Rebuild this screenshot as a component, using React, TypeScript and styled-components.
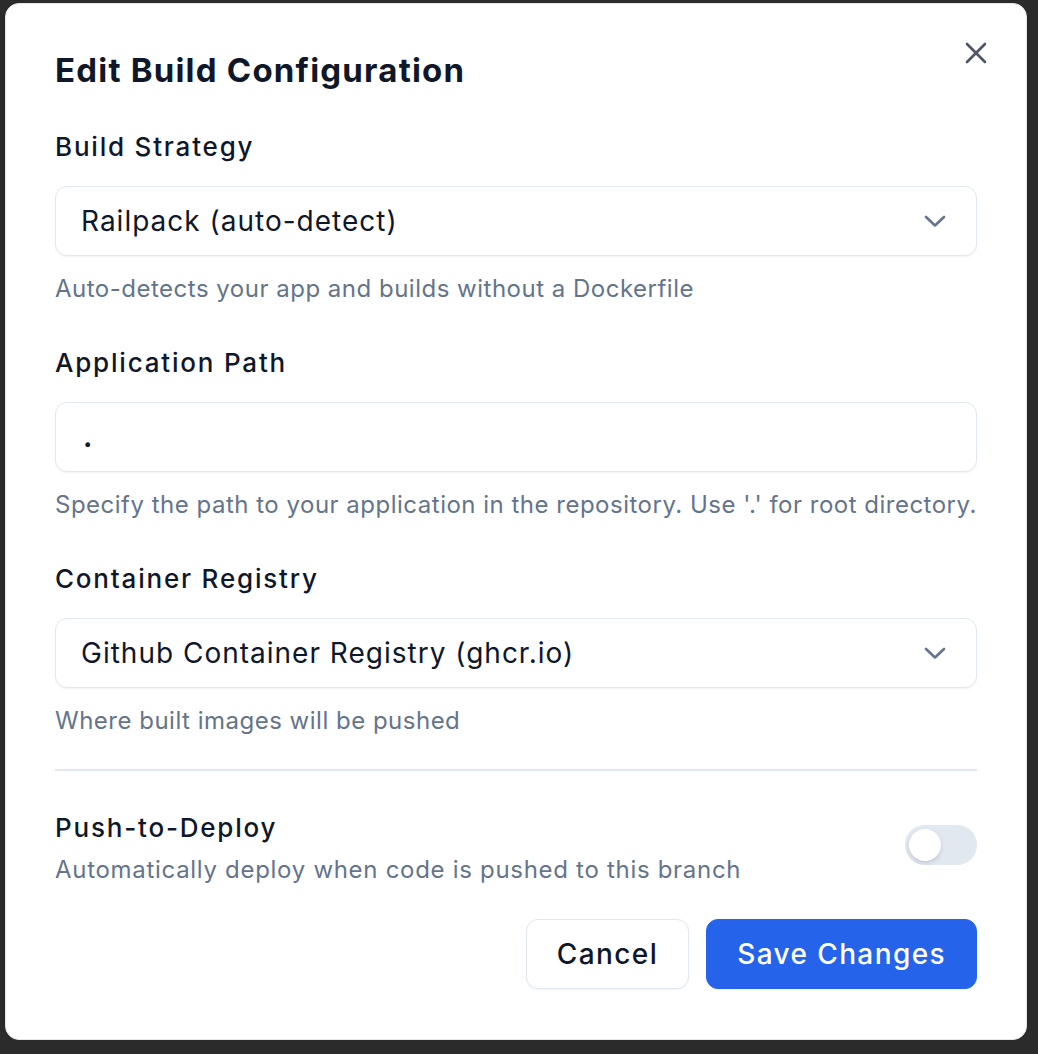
import React from 'react'
import styled, { createGlobalStyle } from 'styled-components'

const GlobalStyle = createGlobalStyle`
  html, body {
    margin: 0;
    padding: 0;
    background: #2b2b2b;
  }
  body {
    font-family: Inter, "Noto Sans", "Liberation Sans", sans-serif;
    color: #0f172a;
  }
  * {
    box-sizing: border-box;
  }
`

const Backdrop = styled.div`
  min-height: 1054px;
  padding: 3px 11px 14px 5px;
`

const Dialog = styled.div`
  position: relative;
  width: 1022px;
  background: #ffffff;
  border: 1px solid #e5e7eb;
  border-radius: 14px;
  padding: 46px 49px 50px;
  display: flex;
  flex-direction: column;
`

const Title = styled.h2`
  margin: 0 0 39px;
  font-size: 33px;
  line-height: 40px;
  font-weight: 700;
  letter-spacing: 1.2px;
  color: #0f172a;
`

const CloseButton = styled.button`
  position: absolute;
  top: 28px;
  right: 29px;
  width: 42px;
  height: 42px;
  display: flex;
  align-items: center;
  justify-content: center;
  border: none;
  background: transparent;
  padding: 0;
  cursor: pointer;
`

const Field = styled.div`
  display: flex;
  flex-direction: column;
  & + & {
    margin-top: 38px;
  }
`

const Label = styled.label`
  font-size: 26px;
  line-height: 36px;
  font-weight: 500;
  letter-spacing: 1.8px;
  color: #0f172a;
`

const Control = styled.div`
  margin-top: 21px;
  height: 70px;
  display: flex;
  align-items: center;
  justify-content: space-between;
  padding: 0 30px 0 25px;
  border: 1.5px solid #e2e8f0;
  border-radius: 12px;
  background: #fff;
  box-shadow: 0 1px 2px rgba(15, 23, 42, 0.05);
  font-size: 28px;
  letter-spacing: 1px;
  color: #0f172a;
`

const TextInput = styled.input`
  margin-top: 21px;
  height: 70px;
  width: 100%;
  padding: 0 25px 0 27px;
  border: 1.5px solid #e2e8f0;
  border-radius: 12px;
  background: #fff;
  box-shadow: 0 1px 2px rgba(15, 23, 42, 0.05);
  font-family: inherit;
  font-size: 28px;
  font-weight: 700;
  color: #0f172a;
  outline: none;
`

const Help = styled.p`
  margin: 15px 0 0;
  font-size: 24px;
  line-height: 36px;
  letter-spacing: 0.5px;
  white-space: nowrap;
  color: #64748b;
`

const Divider = styled.hr`
  margin: 30px 0 0;
  border: none;
  height: 2px;
  background: #e2e8f0;
`

const ToggleRow = styled.div`
  margin-top: 39px;
  display: flex;
  align-items: center;
  justify-content: space-between;
`

const ToggleText = styled.div`
  display: flex;
  flex-direction: column;
  gap: 6px;
`

const Description = styled.span`
  font-size: 24px;
  line-height: 36px;
  letter-spacing: 0.7px;
  color: #64748b;
`

const Track = styled.button<{ $on: boolean }>`
  width: 72px;
  height: 40px;
  padding: 4px;
  margin-top: -8px;
  border: none;
  border-radius: 20px;
  background: ${ (props) => (props.$on ? '#2563eb' : '#e2e8f0') };
  display: flex;
  justify-content: ${ (props) => (props.$on ? 'flex-end' : 'flex-start') };
  cursor: pointer;
`

const Knob = styled.span`
  width: 32px;
  height: 32px;
  border-radius: 50%;
  background: #fff;
  box-shadow: 0 2px 4px rgba(15, 23, 42, 0.15);
`

const Footer = styled.div`
  margin-top: 31px;
  display: flex;
  justify-content: flex-end;
  gap: 17px;
`

const Button = styled.button<{ $primary?: boolean }>`
  height: 70px;
  padding: 0 30px;
  border-radius: 12px;
  font-family: inherit;
  font-size: 28px;
  font-weight: 500;
  letter-spacing: 1.4px;
  cursor: pointer;
  border: 1.5px solid ${ (props) => (props.$primary ? '#2563eb' : '#e2e8f0') };
  background: ${ (props) => (props.$primary ? '#2563eb' : '#fff') };
  color: ${ (props) => (props.$primary ? '#fff' : '#0f172a') };
  box-shadow: 0 1px 2px rgba(15, 23, 42, 0.05);
`

const Chevron = () => (
	<svg width='22' height='12' viewBox='0 0 22 12' fill='none'>
		<path d='M2 2l9 8.5L20 2' stroke='#64748b' strokeWidth='2.6' strokeLinecap='round' strokeLinejoin='round' />
	</svg>
)

const CloseIcon = () => (
	<svg width='22' height='22' viewBox='0 0 22 22' fill='none'>
		<path d='M2 2l18 18M20 2L2 20' stroke='#4b5563' strokeWidth='2.6' strokeLinecap='round' />
	</svg>
)

const App = (): React.ReactNode => (
	<>
		<GlobalStyle />
		<Backdrop>
			<Dialog>
				<CloseButton aria-label='Close'>
					<CloseIcon />
				</CloseButton>
				<Title>Edit Build Configuration</Title>

				<Field>
					<Label>Build Strategy</Label>
					<Control>
						<span>Railpack (auto-detect)</span>
						<Chevron />
					</Control>
					<Help>Auto-detects your app and builds without a Dockerfile</Help>
				</Field>

				<Field>
					<Label>Application Path</Label>
					<TextInput value='.' readOnly />
					<Help>Specify the path to your application in the repository. Use '.' for root directory.</Help>
				</Field>

				<Field>
					<Label>Container Registry</Label>
					<Control>
						<span>Github Container Registry (ghcr.io)</span>
						<Chevron />
					</Control>
					<Help>Where built images will be pushed</Help>
				</Field>

				<Divider />

				<ToggleRow>
					<ToggleText>
						<Label>Push-to-Deploy</Label>
						<Description>Automatically deploy when code is pushed to this branch</Description>
					</ToggleText>
					<Track $on={false} aria-label='Push-to-Deploy'>
						<Knob />
					</Track>
				</ToggleRow>

				<Footer>
					<Button>Cancel</Button>
					<Button $primary>Save Changes</Button>
				</Footer>
			</Dialog>
		</Backdrop>
	</>
)

export default App
